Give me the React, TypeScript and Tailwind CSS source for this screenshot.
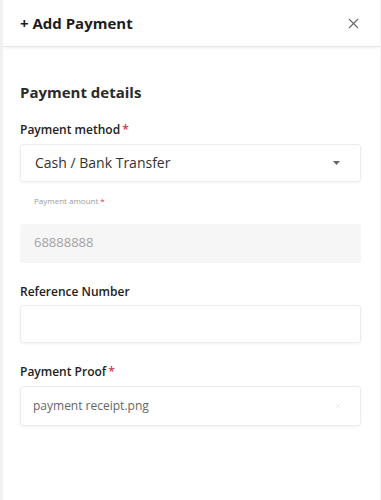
import { X } from "lucide-react";

function Label({ text, required }: { text: string; required?: boolean }) {
  return (
    <div className="text-[12px] font-semibold text-[#222]">
      {text}
      {required && <span className="ml-0.5 text-[#d9304f]">*</span>}
    </div>
  );
}

export default function App() {
  return (
    <div
      className="h-[500px] w-[381px] overflow-hidden border-l-[3px] border-r border-l-[#f1f1f1] border-r-[#f3f3f3] bg-white"
      style={{ fontFamily: "'Open Sans', 'Noto Sans', sans-serif" }}
    >
      <div className="flex h-[47px] items-center justify-between border-b border-[#e6e6e6] pl-[17px] pr-[18px] shadow-[0_1px_3px_rgba(0,0,0,0.06)]">
        <div className="text-[15px] font-bold text-[#1d1d1d]">+ Add Payment</div>
        <X className="h-[17px] w-[17px] text-[#666]" strokeWidth={1.5} />
      </div>

      <div className="pl-[17px] pr-[19px]">
        <div className="mt-[34px] text-[15px] font-bold text-[#2a2a2a]">Payment details</div>

        <div className="mt-[17px]">
          <Label text="Payment method" required />
        </div>
        <div className="mt-[5px] flex h-[38px] items-center justify-between rounded-[3px] border border-[#ececec] pl-[14px] pr-[20px] shadow-[0_1px_3px_rgba(0,0,0,0.05)]">
          <span className="text-[14px] text-[#333]">Cash / Bank Transfer</span>
          <svg width="7" height="4" viewBox="0 0 7 4">
            <path d="M0 0 L7 0 L3.5 4 Z" fill="#666" />
          </svg>
        </div>

        <div className="mt-[13px] pl-[14px] text-[8px] text-[#9a9a9a]">
          Payment amount<span className="ml-0.5 text-[#d9304f]">*</span>
        </div>
        <div className="mt-[17px] flex h-[39px] items-center rounded-[3px] bg-[#f6f6f6] pl-[14px]">
          <span className="text-[13px] text-[#a3a3a3]">68888888</span>
        </div>

        <div className="mt-[20px]">
          <Label text="Reference Number" />
        </div>
        <div className="mt-[4px] h-[38px] rounded-[3px] border border-[#ececec] shadow-[0_1px_3px_rgba(0,0,0,0.05)]" />

        <div className="mt-[20px]">
          <Label text="Payment Proof" required />
        </div>
        <div className="mt-[5px] flex h-[40px] items-center justify-between rounded-[3px] border border-[#ececec] pl-[12px] pr-[18px] shadow-[0_1px_3px_rgba(0,0,0,0.05)]">
          <span className="text-[12px] text-[#666]">payment receipt.png</span>
          <X className="h-[8px] w-[8px] text-[#e4e4e4]" strokeWidth={2} />
        </div>
      </div>
    </div>
  );
}
